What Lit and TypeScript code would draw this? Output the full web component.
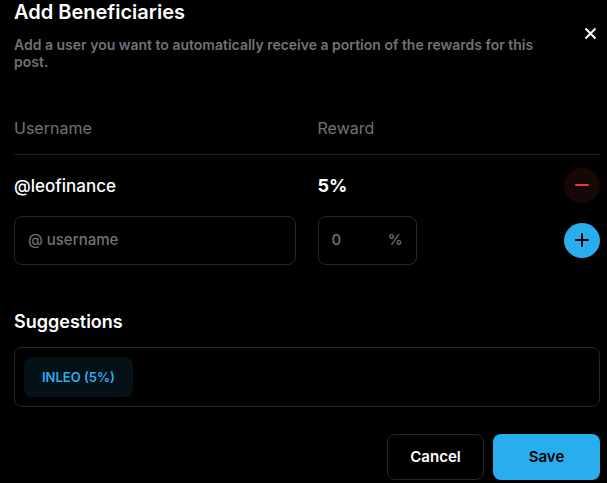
import { LitElement, html, css } from "lit";
import { customElement, property, state } from "lit/decorators.js";

interface Beneficiary {
  name: string;
  share: number;
}

@customElement("app-root")
export class AppRoot extends LitElement {
  static styles = css`
    :host {
      display: block;
      box-sizing: border-box;
      min-height: 100vh;
      padding: 0 7px 3px 14px;
      background: #000;
      color: #fff;
      font-family: Inter, "Liberation Sans", sans-serif;
      font-size: 15px;
      font-weight: 500;
      line-height: 24px;
    }
    * {
      box-sizing: border-box;
    }
    button,
    input {
      font: inherit;
      color: inherit;
      margin: 0;
    }
    button {
      border: 0;
      padding: 0;
      background: none;
      cursor: pointer;
    }
    svg {
      display: block;
      fill: none;
      stroke: currentColor;
      stroke-width: 2;
    }
    .head {
      display: flex;
      align-items: center;
      justify-content: space-between;
      gap: 32px;
    }
    .title {
      margin: 0 0 12px;
      font-size: 20px;
      font-weight: 600;
    }
    .about {
      margin: 0;
      color: #71717a;
      font-size: 14px;
      line-height: 17px;
      font-weight: 600;
    }
    .close {
      padding: 3px 3px 6px;
    }
    .list {
      width: 100%;
      margin-top: 46px;
      border-collapse: collapse;
      table-layout: fixed;
    }
    th,
    td {
      padding: 0;
      text-align: left;
    }
    th {
      padding-bottom: 14px;
      border-bottom: 1px solid #222224;
      color: #71717a;
      font-size: 16px;
      font-weight: 400;
    }
    .col-name {
      width: 51.8%;
    }
    .col-act {
      width: 36px;
    }
    .entry td {
      height: 61px;
    }
    .name,
    .share {
      padding-top: 2px;
    }
    .name {
      font-size: 17px;
    }
    .share {
      font-size: 18px;
      font-weight: 700;
    }
    .name-cell {
      padding-right: 22px;
    }
    .field {
      display: flex;
      align-items: center;
      height: 49px;
      padding: 0 13px;
      border: 1px solid #27272a;
      border-radius: 8px;
      color: #71717a;
    }
    .field.percent {
      width: 99px;
    }
    .field input {
      flex: 1;
      min-width: 0;
      width: 100%;
      padding: 0;
      border: 0;
      outline: 0;
      background: none;
      color: #fff;
    }
    .field input::placeholder {
      color: #71717a;
      opacity: 1;
    }
    .round {
      display: flex;
      align-items: center;
      justify-content: center;
      width: 36px;
      height: 35px;
      border-radius: 50%;
    }
    .remove {
      background: #180707;
      color: #dc3f41;
    }
    .add {
      background: #28aeec;
      color: #000;
    }
    .subtitle {
      margin: 45px 0 13px;
      font-size: 18px;
      font-weight: 600;
    }
    .suggestions {
      display: flex;
      flex-wrap: wrap;
      gap: 9px;
      padding: 9px;
      border: 1px solid #27272a;
      border-radius: 8px;
    }
    .chip {
      height: 40px;
      padding: 0 18px;
      border-radius: 8px;
      background: #041117;
      color: #28aeec;
      font-size: 13px;
      font-weight: 600;
    }
    .actions {
      display: flex;
      justify-content: flex-end;
      gap: 9px;
      margin-top: 27px;
    }
    .action {
      height: 46px;
      border-radius: 8px;
      font-weight: 600;
    }
    .cancel {
      width: 97px;
      border: 1px solid #27272a;
    }
    .save {
      width: 107px;
      background: #28aeec;
      color: #000;
    }
  `;

  @property({ attribute: false }) suggestions: Beneficiary[] = [{ name: "INLEO", share: 5 }];
  @state() private entries: Beneficiary[] = [{ name: "leofinance", share: 5 }];

  private remove(entry: Beneficiary) {
    this.entries = this.entries.filter((e) => e !== entry);
  }

  private insert(entry: Beneficiary) {
    this.entries = [...this.entries, entry];
  }

  private addTyped() {
    const name = this.renderRoot.querySelector<HTMLInputElement>("#name")!;
    const share = this.renderRoot.querySelector<HTMLInputElement>("#share")!;
    if (!name.value || !Number(share.value)) return;
    this.insert({ name: name.value, share: Number(share.value) });
    name.value = share.value = "";
  }

  render() {
    return html`
      <header class="head">
        <div>
          <h1 class="title">Add Beneficiaries</h1>
          <p class="about">
            Add a user you want to automatically receive a portion of the rewards for this post.
          </p>
        </div>
        <button class="close" type="button" aria-label="Close">
          <svg width="13" height="13" viewBox="0 0 13 13"><path d="M1.5 1.5 11.5 11.5M11.5 1.5 1.5 11.5" /></svg>
        </button>
      </header>

      <table class="list">
        <thead>
          <tr>
            <th class="col-name" scope="col">Username</th>
            <th scope="col">Reward</th>
            <th class="col-act"></th>
          </tr>
        </thead>
        <tbody>
          ${this.entries.map(
            (entry) => html`
              <tr class="entry">
                <td class="name">@${entry.name}</td>
                <td class="share">${entry.share}%</td>
                <td>
                  <button class="round remove" type="button" aria-label="Remove ${entry.name}" @click=${() => this.remove(entry)}>
                    <svg width="14" height="14" viewBox="0 0 14 14"><path d="M1 7H13" stroke-linecap="round" /></svg>
                  </button>
                </td>
              </tr>
            `
          )}
          <tr>
            <td class="name-cell">
              <div class="field">
                <input id="name" type="text" aria-label="Username" placeholder="@ username" />
              </div>
            </td>
            <td>
              <label class="field percent">
                <input id="share" type="text" inputmode="numeric" aria-label="Reward percent" placeholder="0" />
                <span>%</span>
              </label>
            </td>
            <td>
              <button class="round add" type="button" aria-label="Add beneficiary" @click=${this.addTyped}>
                <svg width="14" height="14" viewBox="0 0 14 14"><path d="M1 7H13M7 1V13" stroke-linecap="round" /></svg>
              </button>
            </td>
          </tr>
        </tbody>
      </table>

      <h2 class="subtitle">Suggestions</h2>
      <div class="suggestions">
        ${this.suggestions.map(
          (s) => html`<button class="chip" type="button" @click=${() => this.insert(s)}>${s.name} (${s.share}%)</button>`
        )}
      </div>

      <footer class="actions">
        <button class="action cancel" type="button">Cancel</button>
        <button class="action save" type="button">Save</button>
      </footer>
    `;
  }
}
